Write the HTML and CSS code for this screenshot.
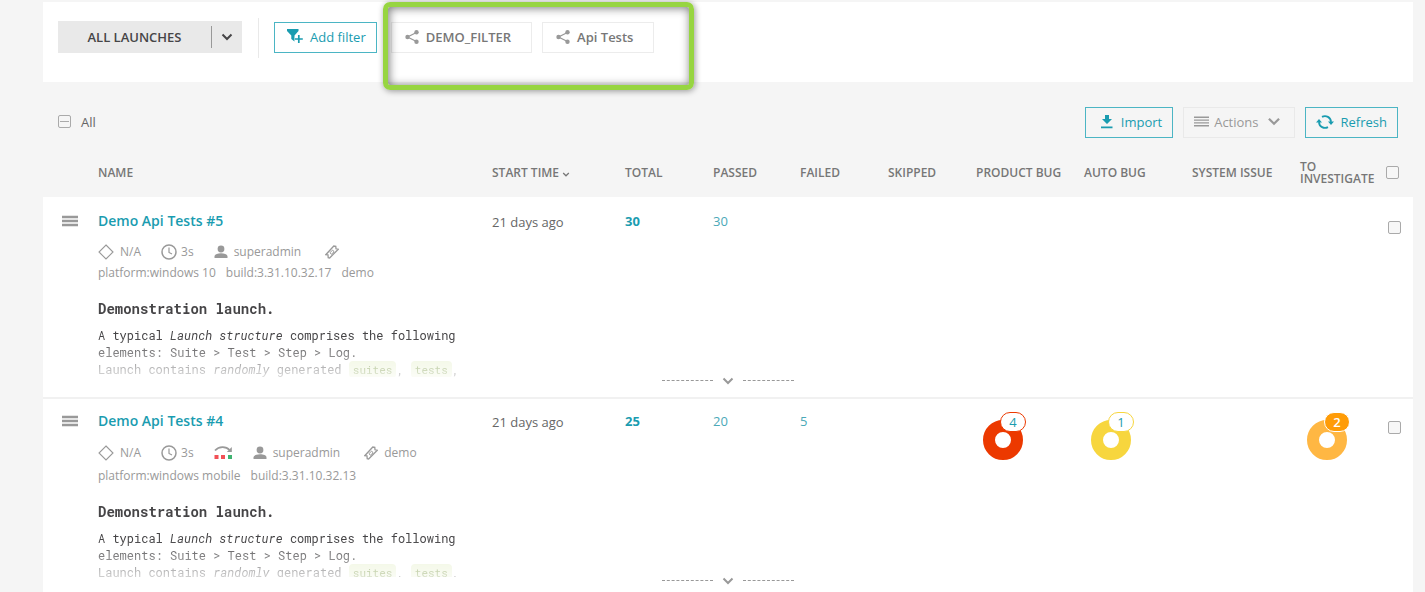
FILE: index.html
```html
<!DOCTYPE html>
<html lang="en">
<head>
<meta charset="utf-8">
<title>Launches</title>
<link rel="stylesheet" href="styles.css">
</head>
<body>
<svg class="sprite" aria-hidden="true">
  <symbol id="i-chevron" viewBox="0 0 12 8"><path d="M1.5 1.5 6 6l4.500-4.500" fill="none" stroke="currentColor" stroke-width="2"/></symbol>
  <symbol id="i-share" viewBox="0 0 14 14"><path d="M11.500 2.500 2.500 7l9 4.500" fill="none" stroke="currentColor" stroke-width="1.300"/><circle cx="2.500" cy="7" r="2.200" fill="currentColor"/><circle cx="11.500" cy="2.300" r="2.200" fill="currentColor"/><circle cx="11.500" cy="11.700" r="2.200" fill="currentColor"/></symbol>
  <symbol id="i-lines" viewBox="0 0 16 11"><path d="M0 1h16M0 4h16M0 7h16M0 10h16" stroke="currentColor" stroke-width="1.500"/></symbol>
  <symbol id="i-menu" viewBox="0 0 16 12"><path d="M0 2h16M0 6h16M0 10h16" stroke="currentColor" stroke-width="2.600"/></symbol>
  <symbol id="i-diamond" viewBox="0 0 16 16"><path d="M8 1l7 7-7 7-7-7z" fill="none" stroke="currentColor" stroke-width="1.100"/></symbol>
  <symbol id="i-clock" viewBox="0 0 16 16"><circle cx="8" cy="8" r="7" fill="none" stroke="currentColor" stroke-width="1.500"/><path d="M8 3.500v5l3 1.500" fill="none" stroke="currentColor" stroke-width="1.200"/></symbol>
  <symbol id="i-user" viewBox="0 0 14 14"><circle cx="7" cy="4" r="3.400" fill="currentColor"/><path d="M0.500 13v-1.500C0.500 9.500 3.500 8.300 7 8.300s6.500 1.200 6.500 3.200V13z" fill="currentColor"/></symbol>
  <symbol id="i-ticket" viewBox="0 0 14 14"><path d="M8.800 1 .8 9.700l2.200.2.200 2.900 1.400.2L13.300 4.200l-2.300-.4-.2-2.500z" fill="none" stroke="currentColor" stroke-width="1.300"/><path d="M7.700 5 9 6.900 6.300 9.300 5 7.600z" fill="none" stroke="currentColor" stroke-width="1"/></symbol>
</svg>
<main class="page">
  <header class="filters">
    <div class="all-launches">
      <button class="all-launches-name">ALL LAUNCHES</button>
      <button class="all-launches-toggle" aria-label="Choose launches"><svg class="chevron"><use href="#i-chevron"/></svg></button>
    </div>
    <div class="add-filter">
      <button class="btn"><svg class="icon-add" viewBox="0 0 16 15"><path d="M0 0h11.500v2L7.500 6.500v6L4.300 10V6.500L0 2z" fill="currentColor"/><path d="M11.800 6v8M7.800 10h8" stroke="#fff" stroke-width="3.500"/><path d="M11.800 6v8M7.800 10h8" stroke="currentColor" stroke-width="1.700"/></svg>Add filter</button>
    </div>
    <div class="filter-list">
      <button class="filter"><svg class="icon-share"><use href="#i-share"/></svg>DEMO_FILTER</button>
      <button class="filter"><svg class="icon-share"><use href="#i-share"/></svg>Api Tests</button>
      <div class="highlight"></div>
    </div>
  </header>

  <div class="toolbar">
    <label class="select-all"><input type="checkbox" class="check check-minus">All</label>
    <div class="actions">
      <button class="btn btn-import"><svg class="icon-import" viewBox="0 0 12 14"><path d="M4 0h4v4h3L6 9 1 4h3zM0 11.500h11.500v1.800H0z" fill="currentColor"/></svg>Import</button>
      <button class="btn btn-muted"><svg class="icon-lines"><use href="#i-lines"/></svg>Actions<svg class="chevron chevron-large"><use href="#i-chevron"/></svg></button>
      <button class="btn btn-refresh"><svg class="icon-refresh" viewBox="0 0 18 14"><path d="M6 1.900a6 6 0 0 1 9 5M12 12.100a6 6 0 0 1-9-5" fill="none" stroke="currentColor" stroke-width="1.800"/><path d="M12 6.500h6L15 10zM0 7.500h6L3 4z" fill="currentColor"/></svg>Refresh</button>
    </div>
  </div>

  <table class="launches">
    <colgroup>
      <col class="c-menu"><col><col class="c-time"><col class="c-count"><col class="c-passed"><col class="c-count"><col class="c-count"><col class="c-defect"><col class="c-defect"><col class="c-defect"><col class="c-last"><col class="c-check">
    </colgroup>
    <thead>
      <tr>
        <td></td><th>NAME</th><th>START TIME <svg class="sort"><use href="#i-chevron"/></svg></th><th>TOTAL</th><th>PASSED</th><th>FAILED</th><th>SKIPPED</th><th>PRODUCT BUG</th><th>AUTO BUG</th><th>SYSTEM ISSUE</th><th>TO INVESTIGATE</th>
        <td><input type="checkbox" class="check" aria-label="Select all launches"></td>
      </tr>
    </thead>
    <tbody>
      <tr class="launch">
        <td><button class="menu" aria-label="Launch menu"><svg class="icon-menu"><use href="#i-menu"/></svg></button></td>
        <td>
          <div class="summary">
            <a class="title" href="#">Demo Api Tests #5</a>
            <div class="meta">
              <span class="fact"><svg class="icon16"><use href="#i-diamond"/></svg>N/A</span>
              <span class="fact fact-time"><svg class="icon16"><use href="#i-clock"/></svg>3s</span>
              <span class="fact fact-user"><svg class="icon14"><use href="#i-user"/></svg>superadmin</span>
              <span class="fact"><svg class="icon14"><use href="#i-ticket"/></svg></span>
            </div>
            <div class="tags"><span>platform:windows 10</span><span>build:3.31.10.32.17</span><span>demo</span></div>
            <div class="description">
              <h3>Demonstration launch.</h3>
              <p>A typical <em>Launch structure</em> comprises the following<br>elements: Suite &gt; Test &gt; Step &gt; Log.<br>Launch contains <em>randomly</em> generated <code>suites</code>, <code>tests</code>,</p>
            </div>
          </div>
        </td>
        <td class="time">21 days ago</td>
        <td><a class="count total" href="#">30</a></td>
        <td><a class="count" href="#">30</a></td>
        <td></td><td></td><td></td><td></td><td></td><td></td>
        <td class="pick"><input type="checkbox" class="check" aria-label="Select Demo Api Tests #5"></td>
      </tr>
      <tr class="more"><td colspan="12"><button class="expand" aria-label="Expand launch"><span class="dash"></span><svg class="chevron"><use href="#i-chevron"/></svg><span class="dash"></span></button></td></tr>
    </tbody>
    <tbody>
      <tr class="launch">
        <td><button class="menu" aria-label="Launch menu"><svg class="icon-menu"><use href="#i-menu"/></svg></button></td>
        <td>
          <div class="summary">
            <a class="title" href="#">Demo Api Tests #4</a>
            <div class="meta meta-tall">
              <span class="fact"><svg class="icon16"><use href="#i-diamond"/></svg>N/A</span>
              <span class="fact fact-time"><svg class="icon16"><use href="#i-clock"/></svg>3s</span>
              <span class="fact"><svg class="icon-rerun" viewBox="0 0 19 14"><path d="M1 4.500C5 0 12 0 15.500 4" fill="none" stroke="#999" stroke-width="1.800"/><path d="M17.800 1v5h-5z" fill="#999"/><path d="M0.500 9h4v4h-4zM7 9h4v4H7z" fill="#f25056"/><path d="M14 9h4v4h-4z" fill="#3fb371"/></svg></span>
              <span class="fact fact-user"><svg class="icon14"><use href="#i-user"/></svg>superadmin</span>
              <span class="fact"><svg class="icon14"><use href="#i-ticket"/></svg>demo</span>
            </div>
            <div class="tags"><span>platform:windows mobile</span><span>build:3.31.10.32.13</span></div>
            <div class="description">
              <h3>Demonstration launch.</h3>
              <p>A typical <em>Launch structure</em> comprises the following<br>elements: Suite &gt; Test &gt; Step &gt; Log.<br>Launch contains <em>randomly</em> generated <code>suites</code>, <code>tests</code>,</p>
            </div>
          </div>
        </td>
        <td class="time">21 days ago</td>
        <td><a class="count total" href="#">25</a></td>
        <td><a class="count" href="#">20</a></td>
        <td><a class="count" href="#">5</a></td>
        <td></td>
        <td><a class="defect product" href="#"><span class="badge">4</span></a></td>
        <td><a class="defect auto" href="#"><span class="badge">1</span></a></td>
        <td></td>
        <td><a class="defect investigate" href="#"><span class="badge">2</span></a></td>
        <td class="pick"><input type="checkbox" class="check" aria-label="Select Demo Api Tests #4"></td>
      </tr>
      <tr class="more"><td colspan="12"><button class="expand" aria-label="Expand launch"><span class="dash"></span><svg class="chevron"><use href="#i-chevron"/></svg><span class="dash"></span></button></td></tr>
    </tbody>
  </table>
</main>
</body>
</html>
```
FILE: styles.css
```css
* { box-sizing: border-box; }

html { overflow: hidden; }

body {
  margin: 0;
  background: #f5f5f5;
  color: #666;
  font: 13px/18px "Open Sans", sans-serif;
}

button {
  display: flex;
  align-items: center;
  margin: 0;
  padding: 0;
  border: 0;
  background: none;
  color: inherit;
  font: inherit;
  cursor: pointer;
}

a { color: #1a9cb0; text-decoration: none; }
svg { flex: none; }
.sprite { display: none; }

.page { padding: 2px 12px 0 43px; }

.filters {
  display: flex;
  align-items: flex-start;
  height: 80px;
  padding: 16px 15px 0;
  background: #fff;
}

.all-launches {
  display: flex;
  align-items: center;
  width: 184px;
  height: 32px;
  margin: 3px 16px 0 0;
  background: #e9e9e9;
  color: #464547;
}

.all-launches-name {
  flex: 1;
  justify-content: center;
  font-weight: 600;
}

.all-launches-toggle {
  width: 31px;
  height: 22px;
  justify-content: center;
  border-left: 1px solid #999;
}

.chevron { width: 12px; height: 8px; }
.chevron-large { width: 14px; height: 9px; margin-left: 8px; }

.add-filter {
  padding: 4px 14px 5px 15px;
  border-left: 1px solid #e9e9e9;
}

.btn {
  height: 31px;
  padding: 0 10px 2px;
  border: 1px solid #4bb5c4;
  color: #1a9cb0;
}

.btn-import { padding-left: 15px; }
.btn-muted { padding-right: 13px; border-color: #e9e9e9; color: #999; }
.icon-add { width: 16px; height: 15px; margin: 0 7px 0 2px; }
.icon-import { width: 12px; height: 14px; margin-right: 8px; }
.icon-lines { width: 15px; height: 11px; margin-right: 5px; }
.icon-refresh { width: 18px; height: 14px; margin-right: 7px; }

.filter-list {
  position: relative;
  display: flex;
  gap: 10px;
  margin-top: 4px;
}

.filter {
  height: 31px;
  padding: 0 20px 2px 13px;
  border: 1px solid #ececec;
  color: #777;
  font-weight: 600;
}

.icon-share { width: 14px; height: 14px; margin-right: 7px; color: #999; }

.highlight {
  position: absolute;
  inset: -20px -40px -37px -8px;
  border: 5px solid #97d541;
  border-radius: 7px;
  box-shadow: 1px 1px 6px #0006, inset 1px 1px 10px #0008;
  pointer-events: none;
}

.toolbar {
  display: flex;
  justify-content: space-between;
  align-items: center;
  padding: 25px 15px 9px;
}

.select-all { display: flex; align-items: center; gap: 10px; padding-bottom: 2px; }
.actions { display: flex; gap: 10px; }

.check {
  appearance: none;
  display: block;
  width: 13px;
  height: 13px;
  margin: 0;
  border: 1px solid #aaa;
  border-radius: 2px;
  background: #f7f7f7;
}

.check-minus {
  background: linear-gradient(#aaa, #aaa) center / 9px 1px no-repeat;
}

.launches {
  width: 100%;
  border-spacing: 0;
  table-layout: fixed;
}

.c-menu { width: 55px; }
.c-time { width: 133px; }
.c-count { width: 88px; }
.c-passed { width: 87px; }
.c-defect { width: 108px; }
.c-last { width: 86px; }
.c-check { width: 27px; }

th, td { padding: 0; text-align: left; vertical-align: top; }

thead tr { height: 50px; }
thead th, thead td { vertical-align: middle; }
thead th { padding-top: 2px; color: #777; font-size: 12px; line-height: 12px; font-weight: 600; }
.sort { width: 8px; height: 5px; }

tbody { background: #fff; }
.launch td { border-top: 2px solid #f1f1f1; }
tbody:first-of-type .launch td { border-color: #fff; }

.menu { margin: 16px 0 0 19px; color: #999; }
.icon-menu { width: 16px; height: 12px; }

.summary {
  height: 178px;
  padding-top: 12px;
  overflow: hidden;
  white-space: nowrap;
}

.title { display: block; font-size: 14px; line-height: 20px; font-weight: 600; }

.meta {
  display: flex;
  align-items: center;
  height: 20px;
  margin-top: 11px;
  color: #999;
  font-size: 12px;
}

.meta-tall { height: 22px; }
.meta-tall + .tags { margin-top: 3px; }
.fact { display: flex; align-items: center; gap: 6px; margin-right: 20px; }
.fact-time { gap: 4px; }
.fact-user { margin-right: 24px; }
.icon16 { width: 16px; height: 16px; }
.icon14 { width: 14px; height: 14px; }
.icon-rerun { width: 19px; height: 14px; }

.tags { display: flex; gap: 10px; margin-top: 2px; color: #999; font-size: 12px; }

.description {
  margin-top: 17px;
  color: #464547;
  font: 12px/17px "Roboto Mono", "DejaVu Sans Mono", monospace;
  mask-image: linear-gradient(#000 38px, #0003 78px);
}

.description h3 { margin: 0 0 8px; font-size: 14px; line-height: 20px; }
.description p { margin: 0; }

.description code {
  padding: 1px 4px;
  border-radius: 4px;
  background: #eaf2d4;
  color: #6f8f35;
  font: inherit;
  font-size: 11px;
}

.time { padding-top: 14px; }
.count { display: block; margin-top: 13px; color: #4ba9b8; }
.total { color: #1a9cb0; font-weight: 700; }
.pick { padding: 22px 0 0 2px; }

.defect {
  position: relative;
  display: block;
  width: 40px;
  height: 40px;
  margin: 21px 0 0 7px;
  border: 12px solid;
  border-radius: 50%;
}

.product { border-color: #ec3900; }
.auto { border-color: #f7d63e; }
.investigate { border-color: #ffb743; }

.badge {
  position: absolute;
  top: -20px;
  left: 5px;
  width: 26px;
  height: 20px;
  border: 1px solid #ec3900;
  border-radius: 10px;
  background: #fff;
  font-size: 13px;
  text-align: center;
}

.auto .badge { border-color: #f7d63e; }
.investigate .badge { border-color: #fff; background: #ff9c07; color: #fff; font-weight: 600; }

.more { height: 20px; }
.expand { gap: 9px; height: 7px; margin: 0 auto; color: #999; }
.dash { width: 51px; border-top: 1px dashed #999; }
```
